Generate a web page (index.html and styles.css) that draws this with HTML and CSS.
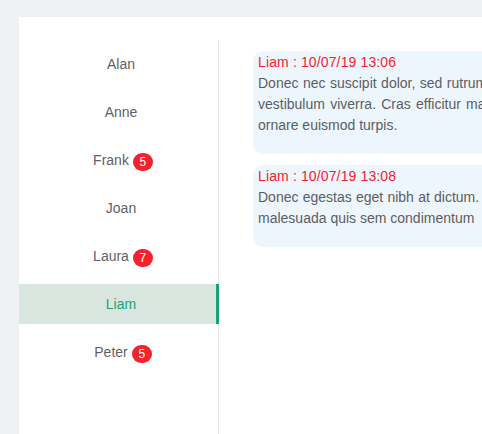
FILE: index.html
```html
<!DOCTYPE html>
<html>
<head>
<meta charset="utf-8">
<link rel="stylesheet" href="styles.css">
</head>
<body>
<div class="card">
  <ul class="contacts">
    <li class="contact"><span class="name">Alan</span></li>
    <li class="contact"><span class="name">Anne</span></li>
    <li class="contact"><span class="name">Frank</span><span class="badge">5</span></li>
    <li class="contact"><span class="name">Joan</span></li>
    <li class="contact"><span class="name">Laura</span><span class="badge">7</span></li>
    <li class="contact active"><span class="name">Liam</span></li>
    <li class="contact"><span class="name">Peter</span><span class="badge">5</span></li>
  </ul>
  <div class="messages">
    <div class="bubble">
      <div class="meta">Liam : 10/07/19 13:06</div>
      <p class="text">Donec nec suscipit dolor, sed rutrum lorem, in vestibulum viverra. Cras efficitur massa vitae, ornare euismod turpis.</p>
    </div>
    <div class="bubble">
      <div class="meta">Liam : 10/07/19 13:08</div>
      <p class="text">Donec egestas eget nibh at dictum. Integer ac malesuada quis sem condimentum</p>
    </div>
  </div>
</div>
</body>
</html>
```
FILE: styles.css
```css
html, body {
  margin: 0;
  padding: 0;
}
body {
  background: #eff1f5;
  font-family: "Liberation Sans", Arial, sans-serif;
  font-size: 14px;
  width: 482px;
  height: 434px;
  overflow: hidden;
  padding: 17px 0 0 19px;
  box-sizing: border-box;
}
.card {
  background: #ffffff;
  width: 700px;
  height: 600px;
  display: flex;
  align-items: flex-start;
  padding-top: 24px;
  box-sizing: border-box;
}
.contacts {
  list-style: none;
  margin: 0;
  padding: 3px 0 0 0;
  width: 199px;
  align-self: stretch;
  border-right: 1px solid #e4e6ea;
  display: flex;
  flex-direction: column;
  gap: 8px;
  flex-shrink: 0;
}
.contact {
  height: 40px;
  margin-right: -1px;
  padding-left: 4px;
  display: flex;
  align-items: center;
  justify-content: center;
  color: #5f6166;
  box-sizing: border-box;
}
.contact.active {
  background: #d9e6df;
  border-right: 3px solid #16a47a;
  padding-left: 7px;
  color: #1ba37a;
}
.badge {
  display: inline-flex;
  align-items: center;
  justify-content: center;
  width: 20px;
  height: 18px;
  margin: 3px -4px 0 4px;
  border-radius: 10px;
  background: #f5222d;
  color: #fff;
  font-size: 12px;
  box-sizing: border-box;
}
.messages {
  padding: 10px 0 0 34px;
  display: flex;
  flex-direction: column;
  align-items: flex-start;
  gap: 11px;
}
.bubble {
  background: #eef6fd;
  border-radius: 10px;
  width: 288px;
  padding: 1px 12px 18px 5px;
  line-height: 21px;
}
.meta {
  color: #f5222d;
  letter-spacing: 0.13px;
}
.text {
  margin: 0;
  color: #5b5e64;
  text-align: justify;
}
```
